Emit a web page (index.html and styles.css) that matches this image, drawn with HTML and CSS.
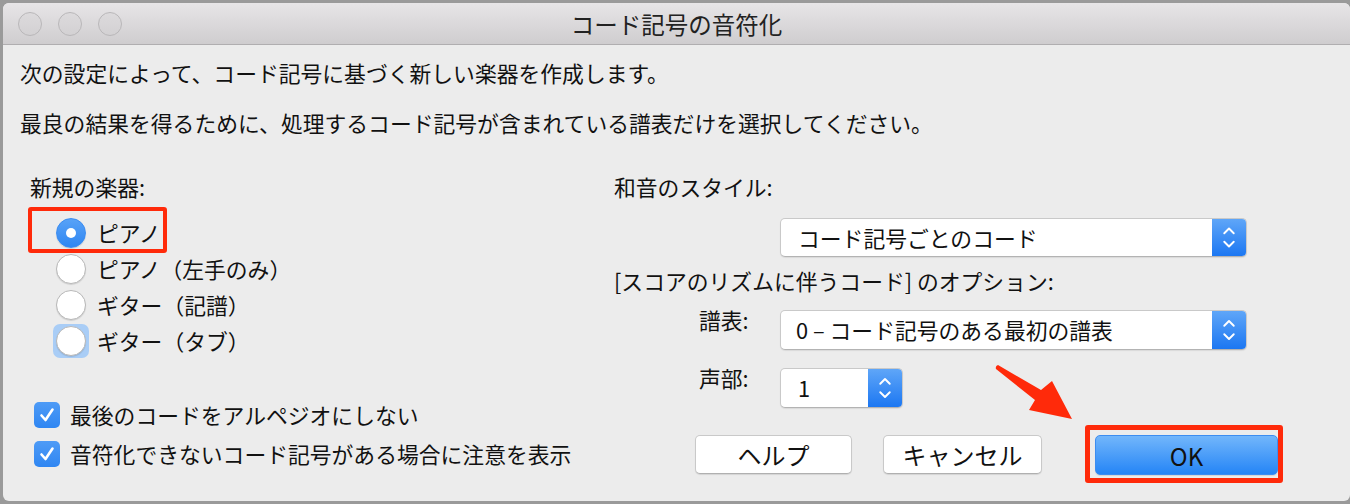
FILE: index.html
```html
<!DOCTYPE html>
<html lang="ja">
<head>
    <meta charset="UTF-8">
    <meta name="viewport" content="width=device-width, initial-scale=1.0">
    <title>コード記号の音符化</title>
    <link rel="stylesheet" href="styles.css">
</head>
<body>
    <div class="window">
        <div class="titlebar">
            <div class="lights"><span></span><span></span><span></span></div>
            <div class="title">コード記号の音符化</div>
        </div>
        <div class="content">
            <p class="intro">次の設定によって、コード記号に基づく新しい楽器を作成します。</p>
            <p class="intro">最良の結果を得るために、処理するコード記号が含まれている譜表だけを選択してください。</p>
            <div class="columns">
                <div class="col-left">
                    <div class="label">新規の楽器:</div>
                    <div class="radios">
                        <div class="radio-row"><span class="radio checked"></span>ピアノ</div>
                        <div class="radio-row"><span class="radio"></span>ピアノ（左手のみ）</div>
                        <div class="radio-row"><span class="radio"></span>ギター（記譜）</div>
                        <div class="radio-row"><span class="radio focused"></span>ギター（タブ）</div>
                    </div>
                    <div class="checks">
                        <div class="check-row"><span class="checkbox"><svg viewBox="0 0 26 26" width="26" height="26"><path d="M7.5 13.5 L11.5 18 L18.5 7.5" fill="none" stroke="#fff" stroke-width="2.6" stroke-linecap="round" stroke-linejoin="round"/></svg></span>最後のコードをアルペジオにしない</div>
                        <div class="check-row"><span class="checkbox"><svg viewBox="0 0 26 26" width="26" height="26"><path d="M7.5 13.5 L11.5 18 L18.5 7.5" fill="none" stroke="#fff" stroke-width="2.6" stroke-linecap="round" stroke-linejoin="round"/></svg></span>音符化できないコード記号がある場合に注意を表示</div>
                    </div>
                </div>
                <div class="col-right">
                    <div class="label">和音のスタイル:</div>
                    <div class="popup popup-style">
                        <span class="popup-text">コード記号ごとのコード</span>
                        <span class="stepper"><svg viewBox="0 0 34 39" width="34" height="39"><path d="M12 15 L17 10 L22 15 M12 24 L17 29 L22 24" fill="none" stroke="#fff" stroke-width="2" stroke-linecap="round" stroke-linejoin="round"/></svg></span>
                    </div>
                    <div class="label label-options">[スコアのリズムに伴うコード] のオプション:</div>
                    <div class="field-row">
                        <span class="field-label">譜表:</span>
                        <div class="popup popup-staff">
                            <span class="popup-text">0 – コード記号のある最初の譜表</span>
                            <span class="stepper"><svg viewBox="0 0 34 40" width="34" height="40"><path d="M12 15.5 L17 10.5 L22 15.5 M12 24.5 L17 29.5 L22 24.5" fill="none" stroke="#fff" stroke-width="2" stroke-linecap="round" stroke-linejoin="round"/></svg></span>
                        </div>
                    </div>
                    <div class="field-row field-voice">
                        <span class="field-label">声部:</span>
                        <div class="popup popup-voice">
                            <span class="popup-text">1</span>
                            <span class="stepper"><svg viewBox="0 0 34 40" width="34" height="40"><path d="M12 15.5 L17 10.5 L22 15.5 M12 24.5 L17 29.5 L22 24.5" fill="none" stroke="#fff" stroke-width="2" stroke-linecap="round" stroke-linejoin="round"/></svg></span>
                        </div>
                    </div>
                    <div class="buttons">
                        <button class="btn btn-help">ヘルプ</button>
                        <button class="btn btn-cancel">キャンセル</button>
                        <button class="btn btn-ok">OK</button>
                    </div>
                </div>
            </div>
        </div>

        <!-- annotations drawn over the dialog -->
        <div class="mark mark-radio"></div>
        <div class="mark mark-ok"></div>
        <svg class="arrow" viewBox="0 0 90 70" width="90" height="70">
            <path d="M8 5 L51 30 L62 21 L82 59 L39 50 L45 40 L6 9 Q5 6 8 5 Z" fill="#ff2a0a"/>
        </svg>
    </div>
</body>
</html>
```

FILE: styles.css
```css
body {
    margin: 0;
    height: 504px;
    overflow: hidden;
    background-color: #9a9a9a;
    color: #111;
    font-family: "Noto Sans CJK JP", "Noto Sans", sans-serif;
}

.window {
    position: relative;
    z-index: 0;
    margin: 3px 0 0 3px;
    width: 1347px;
    height: 498px;
    background-color: #ececec;
    border-radius: 6px;
    overflow: hidden;
}

.titlebar {
    position: relative;
    height: 41px;
    border-bottom: 1px solid #b0aeb0;
    background: linear-gradient(#e7e5e7, #cfcdcf);
    display: flex;
    align-items: center;
    justify-content: center;
}

.lights {
    position: absolute;
    left: 15px;
    top: 9px;
    display: flex;
    gap: 16px;
}

.lights span {
    width: 22px;
    height: 22px;
    border: 1px solid #b9b7b9;
    border-radius: 50%;
    background: linear-gradient(#dcdadc, #d3d1d3);
}

.title {
    font-size: 23.5px;
    line-height: 28px;
    color: #222;
}

.content {
    padding: 15px 0 0 17px;
}

.intro {
    margin: 0;
    font-size: 21.8px;
    line-height: 26px;
}

.intro + .intro {
    margin-top: 24px;
}

.columns {
    display: flex;
    margin-top: 38px;
    padding-left: 10px;
    font-size: 21.8px;
    line-height: 26px;
}

.col-left {
    width: 584px;
}

.col-right {
    flex: 1;
}

.label {
    height: 26px;
    white-space: nowrap;
}

/* radio buttons */
.radios {
    margin-top: 15px;
}

.radio-row {
    height: 36px;
    display: flex;
    align-items: center;
    padding-left: 26px;
}

.radio {
    position: relative;
    width: 30px;
    height: 30px;
    margin-right: 11px;
    border: 1px solid #b8b8b8;
    border-radius: 50%;
    background: #fff;
    box-shadow: 0 1px 1px rgba(0, 0, 0, 0.12);
    box-sizing: border-box;
}

.radio.checked {
    border-color: #3a8cf2;
    background: linear-gradient(#58a2f7, #2f86f2);
}

.radio.checked::after {
    content: "";
    position: absolute;
    left: 9px;
    top: 9px;
    width: 10px;
    height: 10px;
    border-radius: 50%;
    background: #fff;
}

.radio.focused::before {
    content: "";
    position: absolute;
    z-index: -1;
    left: -4px;
    top: -3px;
    width: 36px;
    height: 34px;
    border-radius: 7px;
    background: #a9cdf6;
}

/* checkboxes */
.checks {
    margin-top: 36px;
}

.check-row {
    height: 39px;
    display: flex;
    align-items: center;
    padding-left: 4px;
}

.checkbox {
    width: 26px;
    height: 26px;
    margin-right: 10px;
    border-radius: 5px;
    background: linear-gradient(#4e9bf6, #2f86f2);
}

.checkbox svg {
    display: block;
}

/* popups */
.popup {
    display: flex;
    align-items: center;
    background: #fff;
    border: 1px solid #c9c9c9;
    border-bottom-color: #b3b3b3;
    border-radius: 5px;
    box-shadow: 0 1px 1px rgba(0, 0, 0, 0.08);
    box-sizing: border-box;
    overflow: hidden;
}

.popup-text {
    flex: 1;
    white-space: nowrap;
}

.stepper {
    width: 34px;
    align-self: stretch;
    background: linear-gradient(#5fa6f8, #1c77f2);
}

.stepper svg {
    display: block;
    height: 100%;
}

.popup-style {
    margin: 18px 0 0 166px;
    width: 467px;
    height: 39px;
}

.popup-style .popup-text {
    padding-left: 17px;
}

.label-options {
    margin-top: 11px;
}

.field-row {
    display: flex;
    align-items: flex-start;
    margin-top: 16px;
    padding-left: 85px;
}

.field-voice {
    margin-top: 18px;
}

.field-label {
    width: 81px;
    margin-top: -3px;
}

.popup-staff {
    width: 467px;
    height: 40px;
}

.popup-staff .popup-text {
    padding-left: 15px;
}

.popup-voice {
    width: 123px;
    height: 40px;
}

.popup-voice .popup-text {
    padding-left: 17px;
}

/* push buttons */
.buttons {
    display: flex;
    align-items: flex-start;
    margin-top: 27px;
    padding-left: 81px;
}

.btn {
    height: 39px;
    padding: 0;
    font-family: inherit;
    font-size: 24px;
    color: #111;
    background: #fff;
    border: 1px solid #c9c9c9;
    border-bottom-color: #b0b0b0;
    border-radius: 5px;
    box-shadow: 0 1px 1px rgba(0, 0, 0, 0.1);
}

.btn-help {
    width: 157px;
}

.btn-cancel {
    width: 159px;
    margin-left: 31px;
}

.btn-ok {
    width: 183px;
    height: 40px;
    margin-left: 53px;
    border-color: #3d8df0;
    background: linear-gradient(#72b6fb, #2585f6);
}

/* red annotations */
.mark {
    position: absolute;
    border: 4px solid #ff2a0a;
    border-radius: 3px;
    box-sizing: border-box;
}

.mark-radio {
    left: 25px;
    top: 204px;
    width: 139px;
    height: 46px;
}

.mark-ok {
    left: 1082px;
    top: 422px;
    width: 198px;
    height: 58px;
    border-width: 5px;
}

.arrow {
    position: absolute;
    left: 987px;
    top: 357px;
}
```
